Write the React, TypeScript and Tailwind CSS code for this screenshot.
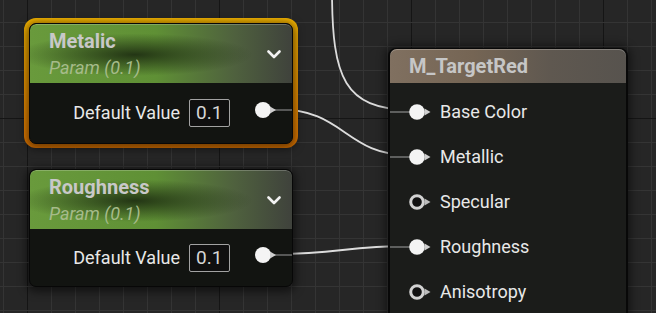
import React from "react"

// grid lines of the graph canvas
const xs: number[] = []
for (let x = 3; x < 656; x += 24) xs.push(x)
const ys: number[] = []
for (let y = 22; y < 313; y += 24) ys.push(y)

function Canvas() {
  return (
    <svg className="absolute inset-0" width={656} height={313}>
      {xs.map((x) => (
        <line
          key={"v" + x}
          x1={x + 0.5}
          y1={0}
          x2={x + 0.5}
          y2={313}
          stroke={(x - 27) % 192 === 0 ? "#151515" : "#343434"}
          strokeWidth={1}
        />
      ))}
      {ys.map((y) => (
        <line
          key={"h" + y}
          x1={0}
          y1={y + 0.5}
          x2={656}
          y2={y + 0.5}
          stroke={y === 118 ? "#151515" : "#343434"}
          strokeWidth={1}
        />
      ))}
      {/* wires */}
      <g fill="none" stroke="#dcdcdc" strokeWidth={1.8}>
        <path d="M 332 -10 C 332 80, 345 108, 409 110" />
        <path d="M 276 109 C 345 109, 345 155, 409 155" />
        <path d="M 276 254 C 340 254, 345 246, 409 246" />
      </g>
    </svg>
  )
}

function Chevron() {
  return (
    <svg width={14} height={9} viewBox="0 0 14 9" className="absolute right-[11px] top-[26px]">
      <polyline points="1.5,1.5 7,7 12.5,1.5" fill="none" stroke="#f2f2f2" strokeWidth={2.6} strokeLinecap="round" strokeLinejoin="round" />
    </svg>
  )
}

// output pin with stub going to the node's right edge
function OutPin() {
  return (
    <svg width={38} height={18} viewBox="0 0 38 18" className="shrink-0 ml-[24px] mb-[6px]">
      <line x1={20} y1={9} x2={38} y2={9} stroke="#6e6e6e" strokeWidth={1.5} />
      <circle cx={9} cy={9} r={8} fill="#f4f4f4" />
      <polygon points="16,5.5 22,9 16,12.5" fill="#cfcfcf" />
    </svg>
  )
}

// input pin on the material node
function InPin({ linked }: { linked: boolean }) {
  return (
    <svg width={44} height={18} viewBox="0 0 44 18" className="shrink-0">
      {linked && <line x1={0} y1={9} x2={20} y2={9} stroke="#767676" strokeWidth={1.5} />}
      {linked ? (
        <circle cx={27} cy={9} r={7.8} fill="#f4f4f4" />
      ) : (
        <circle cx={27} cy={9} r={6.3} fill="#111111" stroke="#d2d2d2" strokeWidth={3} />
      )}
      <polygon points="34.5,5.5 40.5,9 34.5,12.5" fill={linked ? "#d0d0d0" : "#bdbdbd"} />
    </svg>
  )
}

function ParamNode({ title, bodyH }: { title: string; bodyH: number }) {
  return (
    <div className="w-[264px] rounded-[7px] border border-[#070707] bg-[#121411] overflow-hidden shadow-[0_2px_8px_3px_rgba(0,0,0,0.5)]">
      <div className="relative h-[59px] pl-[19px] pt-[5px] rounded-t-[6px] bg-[image:radial-gradient(ellipse_45%_36%_at_40%_52%,rgba(30,46,18,0.92),rgba(30,46,18,0)),linear-gradient(to_right,#699a3c_0%,#5f9035_48%,#4f613e_78%,#3f423c_100%)] shadow-[inset_0_1px_0_rgba(255,255,255,0.22)]">
        <div className="text-[20px] leading-[24px] font-bold text-[#c8c8c8]">{title}</div>
        <div className="mt-[4px] text-[18px] leading-[22px] italic text-[#a6bb8a]">Param (0.1)</div>
        <Chevron />
      </div>
      <div className="flex items-center justify-end" style={{ height: bodyH }}>
        <span className="text-[18px] leading-[22px] text-[#e8e8e8]">Default Value</span>
        <div className="ml-[9px] w-[41px] h-[28px] rounded-[2px] border border-[#a2a2a2] bg-[#0f0f0f] px-[6px] text-[19px] leading-[26px] text-[#d6d6d6]">
          0.1
        </div>
        <OutPin />
      </div>
    </div>
  )
}

const inputs = [
  { label: "Base Color", linked: true },
  { label: "Metallic", linked: true },
  { label: "Specular", linked: false },
  { label: "Roughness", linked: true },
  { label: "Anisotropy", linked: false },
]

export default function App() {
  return (
    <div className="relative w-[656px] h-[313px] overflow-hidden bg-[#262626] [font-family:Roboto,sans-serif]">
      <Canvas />

      {/* Metalic parameter, selected */}
      <div className="absolute left-[24px] top-[18px] w-[274px] h-[130px] rounded-[12px] p-[5px] bg-[linear-gradient(to_bottom,#f3b400,#e27600)]">
        <ParamNode title="Metalic" bodyH={60} />
      </div>

      {/* Roughness parameter */}
      <div className="absolute left-[29px] top-[169px]">
        <ParamNode title="Roughness" bodyH={57} />
      </div>

      {/* Material result node */}
      <div className="absolute left-[388px] top-[48px] w-[240px] h-[300px] rounded-t-[8px] border-x-2 border-t border-[#080808] bg-[#1b1c1a] shadow-[0_0_8px_3px_rgba(0,0,0,0.45)]">
        <div className="h-[34px] pl-[19px] pt-[5px] rounded-t-[7px] bg-[image:linear-gradient(to_right,#807060_0%,#756554_35%,#5f5850_68%,#57534e_100%)] shadow-[inset_0_1px_0_rgba(255,255,255,0.25)]">
          <div className="text-[20px] leading-[24px] font-bold text-[#c6c6c6]">M_TargetRed</div>
        </div>
        <div className="pt-[6px]">
          {inputs.map((p) => (
            <div key={p.label} className="h-[45px] flex items-center">
              <InPin linked={p.linked} />
              <span className="ml-[6px] text-[18px] leading-[22px] text-[#e8e8e8]">{p.label}</span>
            </div>
          ))}
        </div>
      </div>
    </div>
  )
}
